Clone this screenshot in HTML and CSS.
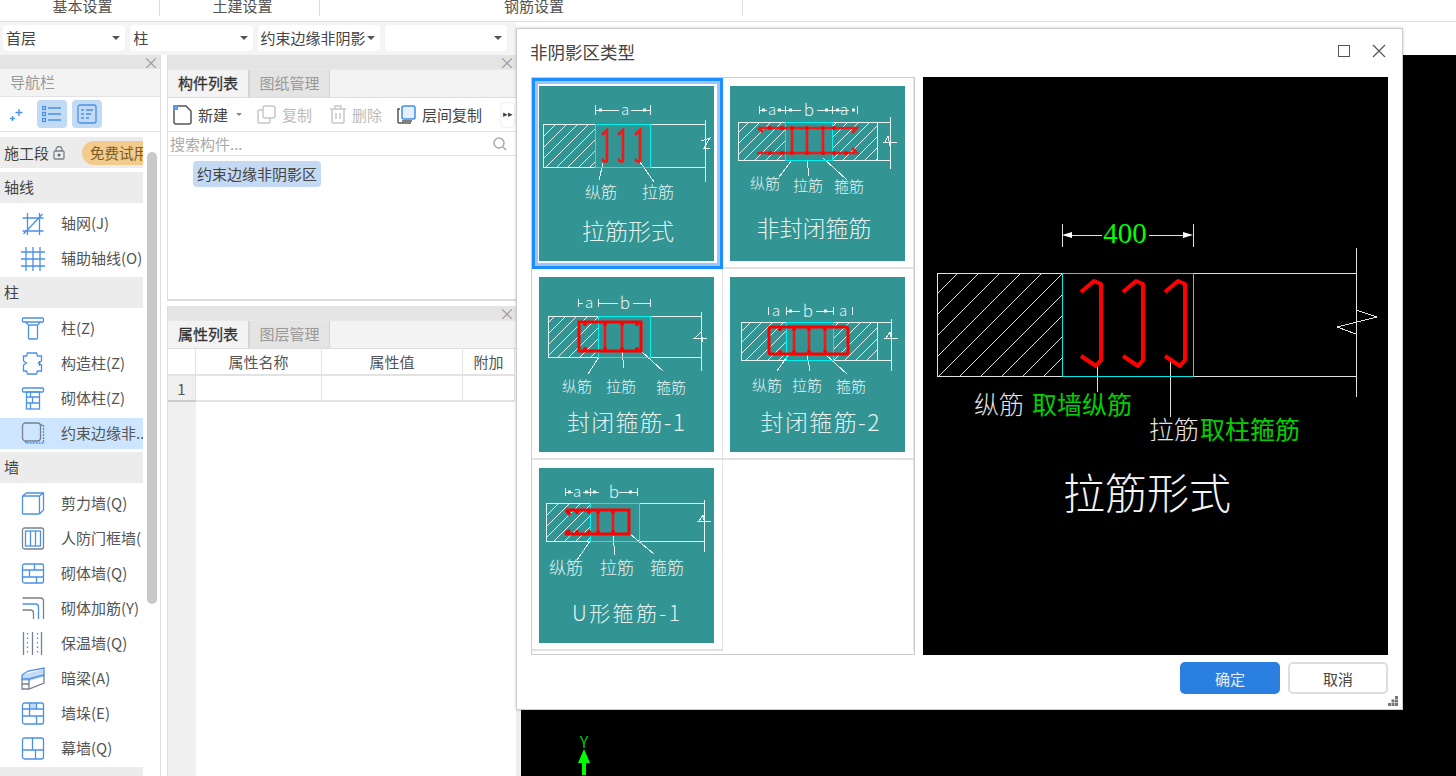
FILE: index.html
```html
<!DOCTYPE html>
<html lang="zh-CN">
<head>
  <meta charset="UTF-8" />
  <title>非阴影区类型</title>
  <link rel="stylesheet" href="styles.css">
</head>
<body>

  <div class="topbar">
    <div class="top-tab">基本设置</div>
    <div class="top-tab">土建设置</div>
    <div class="top-tab wide">钢筋设置</div>
  </div>

  <div class="filters">
    <div class="select">首层</div>
    <div class="select">柱</div>
    <div class="select">约束边缘非阴影</div>
    <div class="select"></div>
  </div>

  <div class="main">
    <!-- left nav -->
    <div class="nav">
      <div class="panel-head"><span class="x">×</span></div>
      <div class="nav-title">导航栏</div>
      <div class="nav-tools">
        <svg class="spark" width="16" height="16" viewBox="0 0 16 16"><path class="ic" d="M10 3v7M6.500 6.500h7M3.500 10v5M1 12.500h5"/></svg>
        <div class="tool-btn"><svg width="20" height="18" viewBox="0 0 20 18"><path class="ic" d="M6 3h13M6 9h13M6 15h13"/><rect class="ic" x="0.500" y="1.500" width="3" height="3"/><rect class="ic" x="0.500" y="7.500" width="3" height="3"/><rect class="ic" x="0.500" y="13.500" width="3" height="3"/></svg></div>
        <div class="tool-btn"><svg width="20" height="20" viewBox="0 0 20 20"><rect class="ic" x="1" y="1" width="18" height="18" rx="2"/><path class="ic" d="M4 6h3M9 6h7M4 10h3M9 10h5M4 14h3M9 14h3"/></svg></div>
      </div>
      <div class="nav-list">
        <div class="nav-group seg">施工段
          <svg class="lock" width="12" height="14" viewBox="0 0 12 14"><path class="ic-g" d="M3 5V3.500a3 3 0 0 1 6 0V5"/><rect class="ic-g" x="1" y="5" width="10" height="8" rx="1"/><circle cx="6" cy="9" r="1.500" fill="#666"/></svg>
          <span class="trial">免费试用</span>
        </div>
        <div class="nav-group">轴线</div>
        <div class="nav-item">
          <svg width="23" height="23" viewBox="0 0 23 23"><path class="ic" d="M1 6h21M1 19h21M6 1v22M18 1v22M2 22 21 2"/></svg><span>轴网(J)</span>
        </div>
        <div class="nav-item">
          <svg width="24" height="24" viewBox="0 0 24 24"><path class="ic" d="M0 5h24M0 12h24M0 19h24M5 0v24M12 0v24M19 0v24"/></svg><span>辅助轴线(O)</span>
        </div>
        <div class="nav-group">柱</div>
        <div class="nav-item">
          <svg width="23" height="23" viewBox="0 0 23 23"><rect class="ic" x="1" y="1" width="21" height="4" rx="1"/><path class="ic" d="M4 5l3 3M19 5l-3 3"/><rect class="ic" x="7" y="8" width="9" height="14" rx="1"/></svg><span>柱(Z)</span>
        </div>
        <div class="nav-item">
          <svg width="23" height="23" viewBox="0 0 23 23"><path class="ic" d="M6 1h9l1 3h4v5l-3 2 3 2v6h-4l-1 3H6l-1-3H2v-6l3-2-3-2V4h3z"/><path class="ic-g" d="M18 9v5"/></svg><span>构造柱(Z)</span>
        </div>
        <div class="nav-item">
          <svg width="23" height="23" viewBox="0 0 23 23"><rect class="ic" x="1" y="1" width="21" height="4" rx="1"/><rect class="ic" x="5" y="5" width="13" height="17"/><path class="ic" d="M5 10h13M5 16h13M11 10v6M9 16v6M9 5v5"/></svg><span>砌体柱(Z)</span>
        </div>
        <div class="nav-item on">
          <svg width="23" height="23" viewBox="0 0 23 23"><path class="ic" stroke-dasharray="2 1" d="M19 3h3v18H4v-2"/><rect class="ic-g" x="1" y="1" width="18" height="18" rx="3"/></svg><span>约束边缘非..</span>
        </div>
        <div class="nav-group">墙</div>
        <div class="nav-item">
          <svg width="23" height="23" viewBox="0 0 23 23"><rect class="ic" x="1" y="4" width="17" height="18" rx="1"/><path class="ic" d="M1 4l4-3h17v17l-4 4M22 1l-4 3"/></svg><span>剪力墙(Q)</span>
        </div>
        <div class="nav-item">
          <svg width="23" height="23" viewBox="0 0 23 23"><rect class="ic-g" x="1" y="1" width="21" height="21" rx="2"/><rect class="ic" x="4" y="4" width="15" height="15"/><path class="ic" d="M9 4v15M14 4v15"/></svg><span class="cut">人防门框墙(Q)</span>
        </div>
        <div class="nav-item">
          <svg width="23" height="23" viewBox="0 0 23 23"><rect class="ic" x="1" y="2" width="21" height="19" rx="2"/><path class="ic" d="M1 8h21M1 15h21M13 2v6M8 8v7M15 15v6"/></svg><span>砌体墙(Q)</span>
        </div>
        <div class="nav-item">
          <svg width="23" height="23" viewBox="0 0 23 23"><path class="ic-g" d="M1 1h18a3 3 0 0 1 3 3v18"/><path class="ic" d="M1 7h13a3 3 0 0 1 3 3v12"/><path class="ic-g" d="M1 13h8a3 3 0 0 1 3 3v6"/></svg><span>砌体加筋(Y)</span>
        </div>
        <div class="nav-item">
          <svg width="23" height="25" viewBox="0 0 23 25"><path class="ic-g" d="M2 1v23M11 1v23M20 1v23"/><path class="ic" stroke-dasharray="1.500 3" d="M6 2v21M16 2v21"/></svg><span>保温墙(Q)</span>
        </div>
        <div class="nav-item">
          <svg width="24" height="23" viewBox="0 0 24 23"><path d="M1 8l7-2 15-4v8L8 14H1z" fill="#c4daf5"/><path class="ic" d="M1 8l6-4 16-3v7L8 12H1z"/><path class="ic-g" d="M1 12v10h7l15-6V8M8 12v10M1 17h7"/></svg><span>暗梁(A)</span>
        </div>
        <div class="nav-item">
          <svg width="23" height="23" viewBox="0 0 23 23"><path d="M8 1h7v6H8z" fill="#c4daf5"/><rect class="ic" x="1" y="1" width="21" height="21" rx="2"/><path class="ic" d="M8 1v6h7V1M1 7h7M15 7h7M8 7v7M1 14h21M15 14v8"/></svg><span>墙垛(E)</span>
        </div>
        <div class="nav-item">
          <svg width="23" height="23" viewBox="0 0 23 23"><rect class="ic" x="1" y="1" width="21" height="21" rx="2"/><path class="ic" d="M11 1v12M1 13h21M14 13v9"/></svg><span>幕墙(Q)</span>
        </div>
        <div class="nav-group"></div>
      </div>
      <div class="scroll-thumb"></div>
    </div>

    <!-- component + property panels -->
    <div class="mid">
      <div class="panel comp-panel">
        <div class="panel-head"><span class="x">×</span></div>
        <div class="tabs">
          <div class="tab active">构件列表</div>
          <div class="tab">图纸管理</div>
        </div>
        <div class="actions">
          <svg width="19" height="20" viewBox="0 0 19 20"><path class="ic-d" d="M1 5v12a2 2 0 0 0 2 2h13a2 2 0 0 0 2-2V6l-5-5H5"/><rect x="0" y="0" width="5" height="5" fill="#5b9bea"/></svg>
          <span class="act">新建</span><i class="caret"></i>
          <svg class="a2" width="19" height="19" viewBox="0 0 19 19"><rect class="ic-l" x="6" y="1" width="12" height="12" rx="2"/><path class="ic-l" d="M6 5H2a1 1 0 0 0-1 1v11a1 1 0 0 0 1 1h10a1 1 0 0 0 1-1v-4"/></svg>
          <span class="act off">复制</span>
          <svg class="a3" width="16" height="19" viewBox="0 0 16 19"><path class="ic-l" d="M0 4h16M5 4V1h6v3M2 4v13a1 1 0 0 0 1 1h10a1 1 0 0 0 1-1V4M6 8v6M10 8v6"/></svg>
          <span class="act off">删除</span>
          <svg class="a4" width="19" height="20" viewBox="0 0 19 20"><rect x="5" y="1" width="13" height="13" rx="2" fill="#e4f0ff" stroke="#3f8ce8" stroke-width="1.500"/><path class="ic-d" d="M3 4H1v13a1 1 0 0 0 1 1h12M5 16h10"/></svg>
          <span class="act">层间复制</span>
          <div class="more">▸▸</div>
        </div>
        <div class="search">
          <span>搜索构件...</span>
          <svg width="14" height="14" viewBox="0 0 14 14"><circle cx="6" cy="6" r="5" fill="none" stroke="#aaa" stroke-width="1.500"/><path d="M10 10l3 3" stroke="#aaa" stroke-width="1.500"/></svg>
        </div>
        <div class="tree"><span class="tag">约束边缘非阴影区</span></div>
      </div>

      <div class="panel prop-panel">
        <div class="panel-head"><span class="x">×</span></div>
        <div class="tabs">
          <div class="tab active">属性列表</div>
          <div class="tab">图层管理</div>
        </div>
        <div class="prop-table">
          <div class="cell"></div><div class="cell">属性名称</div><div class="cell">属性值</div><div class="cell">附加</div>
          <div class="cell idx">1</div><div class="cell"></div><div class="cell"></div><div class="cell"></div>
          <div class="gutter"></div>
        </div>
      </div>
    </div>

    <!-- drawing area behind the dialog -->
    <div class="canvas">
      <div class="axis">
        <span>Y</span>
        <svg width="12" height="26" viewBox="0 0 12 26"><path d="M6 0l6 14H8v12H4V14H0z" fill="#0f0"/></svg>
      </div>
    </div>
  </div>

  <!-- dialog -->
  <div class="dialog">
    <div class="dlg-head">
      <span class="dlg-title">非阴影区类型</span>
      <svg width="12" height="12" viewBox="0 0 12 12"><rect x="0.500" y="0.500" width="11" height="11" fill="none" stroke="#555"/></svg>
      <svg class="dlg-x" width="14" height="14" viewBox="0 0 14 14"><path d="M1 1l12 12M13 1 1 13" stroke="#555" stroke-width="1.200"/></svg>
    </div>

    <div class="dlg-body">
      <div class="thumbs">

        <div class="thumb-cell sel">
          <svg class="thumb" width="175" height="175" viewBox="0 0 175 175">
            <defs><pattern id="ht" patternUnits="userSpaceOnUse" width="11" height="11"><path d="M-1 12 12 -1" stroke="#e8f4f2" stroke-width="1"/></pattern></defs>
            <rect x="4" y="38" width="52" height="43" fill="url(#ht)"/>
            <path class="w" d="M56 38H4v43h52M111 38h55M112 81h54M166 34v62M162 55l9-3-6 10 6 0M56 19v10M111 19v10M56 24h24M92 24h19M64 77l-4 17M101 76l14 20"/>
            <path class="tick" d="M60 24h3M104 24h3"/>
            <rect class="cy" x="56" y="38" width="55.500" height="43"/>
            <path class="rd" d="M66 46l2-2v31l-2 1M63 49l3-3M63 73l3 3M82 46l2-2v31l-2 1M79 49l3-3M79 73l3 3M99 46l2-2v31l-2 1M96 49l3-3M96 73l3 3"/>
            <text class="t-sm" x="86" y="29" font-size="15">a</text>
            <text class="t-sm" x="62" y="112" font-size="16">纵筋</text>
            <text class="t-sm" x="119" y="112" font-size="16">拉筋</text>
            <text class="t-lg" x="89" y="154" font-size="23">拉筋形式</text>
          </svg>
        </div>

        <div class="thumb-cell">
          <svg class="thumb" width="175" height="175" viewBox="0 0 175 175">
            <rect x="8" y="36" width="47" height="38" fill="url(#ht)"/>
            <rect x="102" y="36" width="45" height="38" fill="url(#ht)"/>
            <path class="w" d="M8 36h139v38H8zM147 36h13M147 74h13M160 31v52M153 56h14M155 56l3-6 2 10M29 20v8M55 20v8M102 20v8M127 20v8M29 24h8M47 24h24M87 24h32M62 74l-13 17M77 74l2 16M93 72l24 22"/>
            <path class="tick" d="M32 24h3M48 24h3M59 24h3M95 24h3M106 24h3M122 24h3"/>
            <rect class="cy" x="55" y="36" width="47" height="38"/>
            <path class="rd" d="M28 42h99l-5 5M27 67h100l-5-5M28 42l5 4M62 42v25M77 42v25M93 42v25"/>
            <path class="knot" d="M40 42h0M52 42h0M62 42h0M77 42h0M93 42h0M104 42h0M40 67h0M52 67h0M62 67h0M77 67h0M93 67h0M104 67h0M116 67h0"/>
            <text class="t-sm" x="42" y="29" font-size="15">a</text>
            <text class="t-sm" x="79" y="30" font-size="17">b</text>
            <text class="t-sm" x="114" y="29" font-size="15">a</text>
            <text class="t-sm" x="35" y="103" font-size="15">纵筋</text>
            <text class="t-sm" x="78" y="105" font-size="15">拉筋</text>
            <text class="t-sm" x="119" y="106" font-size="15">箍筋</text>
            <text class="t-lg" x="84" y="151" font-size="23">非封闭箍筋</text>
          </svg>
        </div>

        <div class="thumb-cell">
          <svg class="thumb" width="175" height="175" viewBox="0 0 175 175">
            <rect x="9" y="39" width="50" height="41" fill="url(#ht)"/>
            <path class="w" d="M59 39H9v41h50M111 39h51M111 80h51M162 35v59M154 61h14M156 61l6-6 2 10M39 22v8M59 22v8M111 22v8M39 26h5M59 26h20M94 26h17M60 80l-11 17M83 74l2 17M102 74l22 20"/>
            <rect class="cy" x="59" y="39" width="52" height="41"/>
            <rect class="rd2" x="40" y="45" width="62" height="29"/>
            <path class="rd" d="M66 45v29M83 45v29"/>
            <path class="knot" d="M46 47h0M66 47h0M83 47h0M98 47h0M46 72h0M66 72h0M83 72h0M98 72h0"/>
            <text class="t-sm" x="50" y="31" font-size="15">a</text>
            <text class="t-sm" x="86" y="32" font-size="17">b</text>
            <text class="t-sm" x="38" y="115" font-size="15">纵筋</text>
            <text class="t-sm" x="82" y="115" font-size="15">拉筋</text>
            <text class="t-sm" x="132" y="116" font-size="15">箍筋</text>
            <text class="t-lg" x="87" y="154" font-size="23" textLength="118">封闭箍筋-1</text>
          </svg>
        </div>

        <div class="thumb-cell">
          <svg class="thumb" width="175" height="175" viewBox="0 0 175 175">
            <rect x="11" y="45" width="45" height="38" fill="url(#ht)"/>
            <rect x="103" y="45" width="44" height="38" fill="url(#ht)"/>
            <path class="w" d="M11 45h136v38H11zM147 45h14M147 83h14M161 42v52M154 61h14M156 61l4-6 2 10M38 30v8M56 30v8M103 30v8M122 30v8M56 34h14M86 34h17M59 77l-12 17M77 77l3 17M95 77l22 20"/>
            <path class="tick" d="M59 34h3M94 34h3"/>
            <rect class="cy" x="56" y="45" width="47" height="38"/>
            <rect class="rd2" x="39" y="50" width="79" height="27" rx="2"/>
            <path class="rd" d="M64 50v27M79 50v27M95 50v27"/>
            <path class="knot" d="M50 52h0M64 52h0M79 52h0M95 52h0M50 75h0M64 75h0M79 75h0M95 75h0"/>
            <text class="t-sm" x="46" y="39" font-size="15">a</text>
            <text class="t-sm" x="78" y="40" font-size="17">b</text>
            <text class="t-sm" x="113" y="39" font-size="15">a</text>
            <text class="t-sm" x="37" y="114" font-size="15">纵筋</text>
            <text class="t-sm" x="77" y="114" font-size="15">拉筋</text>
            <text class="t-sm" x="121" y="115" font-size="15">箍筋</text>
            <text class="t-lg" x="90" y="154" font-size="23" textLength="119">封闭箍筋-2</text>
          </svg>
        </div>

        <div class="thumb-cell">
          <svg class="thumb" width="175" height="175" viewBox="0 0 175 175">
            <rect x="7" y="35" width="44" height="38" fill="url(#ht)"/>
            <path class="w" d="M51 35H7v38h44M100 35h65M100 73h65M165 32v52M158 53h14M160 53l4-6 2 10M26 20v8M51 20v8M98 20v8M26 24h8M44 24h16M80 24h18M51 73l-13 19M74 68l2 19M91 66l24 20"/>
            <path class="tick" d="M29 24h3M46 24h3M54 24h3M90 24h3"/>
            <rect class="cy" x="51" y="35" width="49" height="38"/>
            <path class="rd2" d="M27 42h63v24H26M27 42l4 5M26 66l5-4"/>
            <path class="rd" d="M59 42v24M74 42v24"/>
            <path class="knot" d="M38 44h0M50 44h0M59 44h0M74 44h0M38 64h0M50 64h0M59 64h0M74 64h0"/>
            <text class="t-sm" x="38" y="29" font-size="15">a</text>
            <text class="t-sm" x="75" y="30" font-size="17">b</text>
            <text class="t-sm" x="27" y="106" font-size="17">纵筋</text>
            <text class="t-sm" x="78" y="106" font-size="17">拉筋</text>
            <text class="t-sm" x="128" y="106" font-size="17">箍筋</text>
            <text class="t-lg" x="87" y="153" font-size="21" textLength="108">U形箍筋-1</text>
          </svg>
        </div>

        <div class="thumb-cell empty"></div>
      </div>

      <svg class="preview" width="465" height="578" viewBox="0 0 465 578">
        <defs><pattern id="hb" patternUnits="userSpaceOnUse" width="21" height="21"><path d="M-1 22 22 -1" stroke="#ddd" stroke-width="1"/></pattern></defs>
        <rect x="14" y="196" width="125" height="103" fill="url(#hb)"/>
        <path class="pw" d="M139 196H14v103h125M270 196h163M270 299h163M433 171v149M433 233l21 7-40 10 19 7M139 147v23M270 147v23M145 158h34M226 158h39M174 288v27M247 283v57"/>
        <path d="M139 158l10-3v6zM270 158l-10-3v6z" fill="#fff"/>
        <rect class="pc" x="139" y="196" width="131" height="103"/>
        <path class="pr" d="M158 215l13-11 7 3v76l-5 6-15-10M200 215l13-11 7 3v76l-5 6-15-10M242 215l13-11 7 3v76l-5 6-15-10"/>
        <text class="t-num" x="202" y="166">400</text>
        <text class="t-pv" x="51" y="337">纵筋</text>
        <text class="t-pg" x="109" y="337">取墙纵筋</text>
        <text class="t-pv" x="226" y="362">拉筋</text>
        <text class="t-pg" x="277" y="362">取柱箍筋</text>
        <text class="t-pt" x="140" y="432">拉筋形式</text>
      </svg>
    </div>

    <div class="dlg-foot">
      <button class="btn primary">确定</button>
      <button class="btn">取消</button>
    </div>
    <svg class="grip" width="10" height="10" viewBox="0 0 10 10"><path d="M7 0h3v3H7zM3.500 3.500h3v3h-3zM7 3.500h3v3H7zM0 7h3v3H0zM3.500 7h3v3h-3zM7 7h3v3H7z" fill="#777"/></svg>
  </div>

</body>
</html>
```

FILE: styles.css
```css
*{box-sizing:border-box}
html,body{height:100%}
body{margin:0;background:#fff;color:#444;font-family:"Noto Sans CJK SC","Liberation Sans",sans-serif;font-size:15px;overflow:hidden}

/* top */
.topbar{display:flex;height:22px;border-bottom:1px solid #ddd;background:#fff}
.top-tab{width:160px;height:16px;line-height:12px;text-align:center;border-right:1px solid #ddd;color:#555;padding-left:6px}
.top-tab.wide{width:423px}
.filters{display:flex;gap:5px;height:33px;padding:3px;background:#f4f4f4;width:516px}
.select{position:relative;width:122.250px;height:26px;line-height:25px;padding-left:3px;background:#fff;border-radius:4px;white-space:nowrap;color:#444}
.select:after{content:"";position:absolute;right:5px;top:11px;border:4px solid transparent;border-top-color:#555;border-bottom:0}

.main{display:flex;height:721px}

/* nav */
.nav{position:relative;width:161px;border-right:1px solid #ddd;flex:none;overflow:hidden}
.panel-head{height:14px;background:#e4e4e4;text-align:right;padding-right:1px}
.x{display:block;font-size:16px;line-height:14px;color:#999}
.nav-title{height:28px;line-height:26px;padding-left:10px;background:#f3f3f3;color:#999;border-bottom:1px solid #e2e2e2}
.nav-tools{display:flex;align-items:center;height:35px;padding-left:37px;gap:5px;border-bottom:1px solid #e2e2e2;position:relative}
.spark{position:absolute;left:9px;top:9px}
.tool-btn{width:30px;height:28px;background:#c2dbf5;border-radius:4px;display:flex;align-items:center;justify-content:center}
.nav-list{width:143px;padding-top:5px;overflow:hidden;white-space:nowrap}
.nav-group{height:31px;line-height:30px;padding-left:4px;background:#ececec;margin-top:3px;color:#444}
.seg{display:flex;align-items:center;margin-top:0;margin-bottom:4px;overflow:hidden}
.seg + .nav-group{margin-top:0}
.lock{margin-left:4px;flex:none}
.trial{flex:none;margin-left:17px;height:24px;line-height:23px;padding:0 0 0 8px;width:70px;font-size:14.500px;background:#f3cb8c;color:#7b5c22;border-radius:12px}
.nav-item{display:flex;align-items:center;height:31px;margin-top:4px;padding-left:21px}
.nav-group + .nav-item{margin-top:5px}
.nav-item svg{flex:none;width:24px}
.nav-item span{margin-left:16px;padding-bottom:3px;color:#555}
.nav-item span.cut{width:80px;overflow:hidden}
.nav-item.on{background:#cde5ff}
.scroll-thumb{position:absolute;left:147px;top:97px;width:10px;height:452px;background:#c9c9c9;border-radius:5px}

/* icon strokes */
.ic,.ic-g,.ic-d,.ic-l{fill:none;stroke-width:1.300}
.ic{stroke:#4a90e8}
.ic-g{stroke:#77808c}
.ic-d{stroke:#555;stroke-width:1.500}
.ic-l{stroke:#c8c8c8;stroke-width:1.500}

/* middle panels */
.mid{width:349px;margin-left:6px;flex:none;display:flex;flex-direction:column}
.panel{border-left:1px solid #ddd}
.comp-panel{height:246px;border-bottom:2px solid #ddd}
.prop-panel{flex:1;margin-top:5px;display:flex;flex-direction:column}
.tabs{display:flex;height:29px;background:#f3f3f3;border-top:1px solid #e8e8e8;border-bottom:1px solid #ddd}
.tab{width:81px;line-height:26px;text-align:center;color:#999;background:#e4e4e4;border:1px solid #d4d4d4;border-bottom:0;border-top:0}
.tab.active{color:#333;background:#f3f3f3;border:0;border-right:1px solid #d4d4d4;-webkit-text-stroke:.3px #333}
.actions{position:relative;display:flex;align-items:center;height:34px;padding-left:5px;border-bottom:1px solid #e2e2e2}
.act{margin-left:6px;white-space:nowrap;color:#444}
.act.off{color:#bbb}
.caret{margin-left:8px;border:3.500px solid transparent;border-top-color:#888;border-bottom:0}
.a2{margin-left:15px}
.a3{margin-left:18px}
.a4{margin-left:15px}
.more{position:absolute;left:333px;top:5px;width:13px;height:24px;line-height:22px;font-size:9px;text-align:center;color:#444;border-radius:4px;box-shadow:0 0 2px #ccc}
.search{display:flex;justify-content:space-between;align-items:center;height:24px;padding:0 9px 0 2px;color:#aaa;border-bottom:1px solid #e2e2e2}
.tree{padding:5px 0 0 25px}
.tag{display:inline-block;height:26px;line-height:25px;padding:0 4px;background:#c4daf3;border-radius:4px;color:#444}
.prop-table{flex:1;display:grid;grid-template-columns:28px 126px 141px 52px;grid-template-rows:27px 26px 1fr;width:347px}
.cell{border-right:1px solid #e2e2e2;border-bottom:2px solid #e2e2e2;text-align:center;line-height:25px;color:#555}
.idx{background:#f0f0f0;border-bottom-color:#ccc}
.gutter{background:#f0f0f0}

/* drawing area */
.canvas{position:relative;flex:1;margin-left:0;border-left:5px solid #eee;background:#000}
.axis{position:absolute;left:57px;top:678px;display:flex;flex-direction:column;align-items:center;color:#00c800;font-size:16px;line-height:16px}

/* dialog */
.dialog{position:absolute;left:516px;top:28px;width:887px;height:682px;background:#fff;border:1px solid #ccc;box-shadow:0 0 3px rgba(0,0,0,.2)}
.dlg-head{display:flex;align-items:center;height:48px;padding:0 16px 4px 13px}
.dlg-title{flex:1;font-size:17.500px;color:#444}
.dlg-x{margin-left:22px}
.dlg-body{display:flex;gap:8px;padding-left:14px;height:578px}
.thumbs{width:384px;display:grid;grid-template-columns:191px 191px;grid-auto-rows:191px;border:1px solid #ccc;background:#fff}
.thumb-cell{padding:8px 0 0 7px;border-right:1px solid #e2e2e2;border-bottom:2px solid #e2e2e2}
.thumb-cell.sel{border:0;box-shadow:inset 0 0 0 3px #1a8fff,inset 0 0 0 6px #9cc4ff}
.thumb-cell.empty{border-bottom:0}
.thumb{display:block;background:#339494}
.preview{display:block;background:#000;flex:none}
.dlg-foot{display:flex;justify-content:flex-end;gap:8px;padding:7px 14px 0 0}
.btn{width:100px;height:32px;padding:0;background:#fff;border:2px solid #ddd;border-radius:5px;color:#444;font:15px "Noto Sans CJK SC",sans-serif}
.btn.primary{background:#2b7fe0;border:0;color:#e6f0ff}
.grip{position:absolute;right:4px;bottom:3px}

/* cad thumbnails */
.w{fill:none;stroke:#e8f4f2;stroke-width:1;shape-rendering:crispEdges}
.tick{fill:none;stroke:#e8f4f2;stroke-width:3}
.cy{fill:none;stroke:#00f0f0;stroke-width:1;shape-rendering:crispEdges}
.rd{fill:none;stroke:#f01818;stroke-width:2.600}
.rd2{fill:none;stroke:#f00;stroke-width:3}
.knot{fill:none;stroke:#f00;stroke-width:4;stroke-linecap:round}
.t-sm,.t-lg{fill:#e4f2f0;text-anchor:middle;font-weight:300}
.pw{fill:none;stroke:#e0e0e0;stroke-width:1;shape-rendering:crispEdges}
.pc{fill:none;stroke:#00e8e8;stroke-width:1;shape-rendering:crispEdges}
.pr{fill:none;stroke:#f00;stroke-width:4;stroke-linejoin:round}
.t-num{fill:#0f0;text-anchor:middle;font:29px "Liberation Serif",serif}
.t-pv{fill:#e4e4e4;font-size:25px;font-weight:300}
.t-pg{fill:#00d000;font-size:25px}
.t-pt{fill:#f4f4f4;font-size:42px;font-weight:300}
```
